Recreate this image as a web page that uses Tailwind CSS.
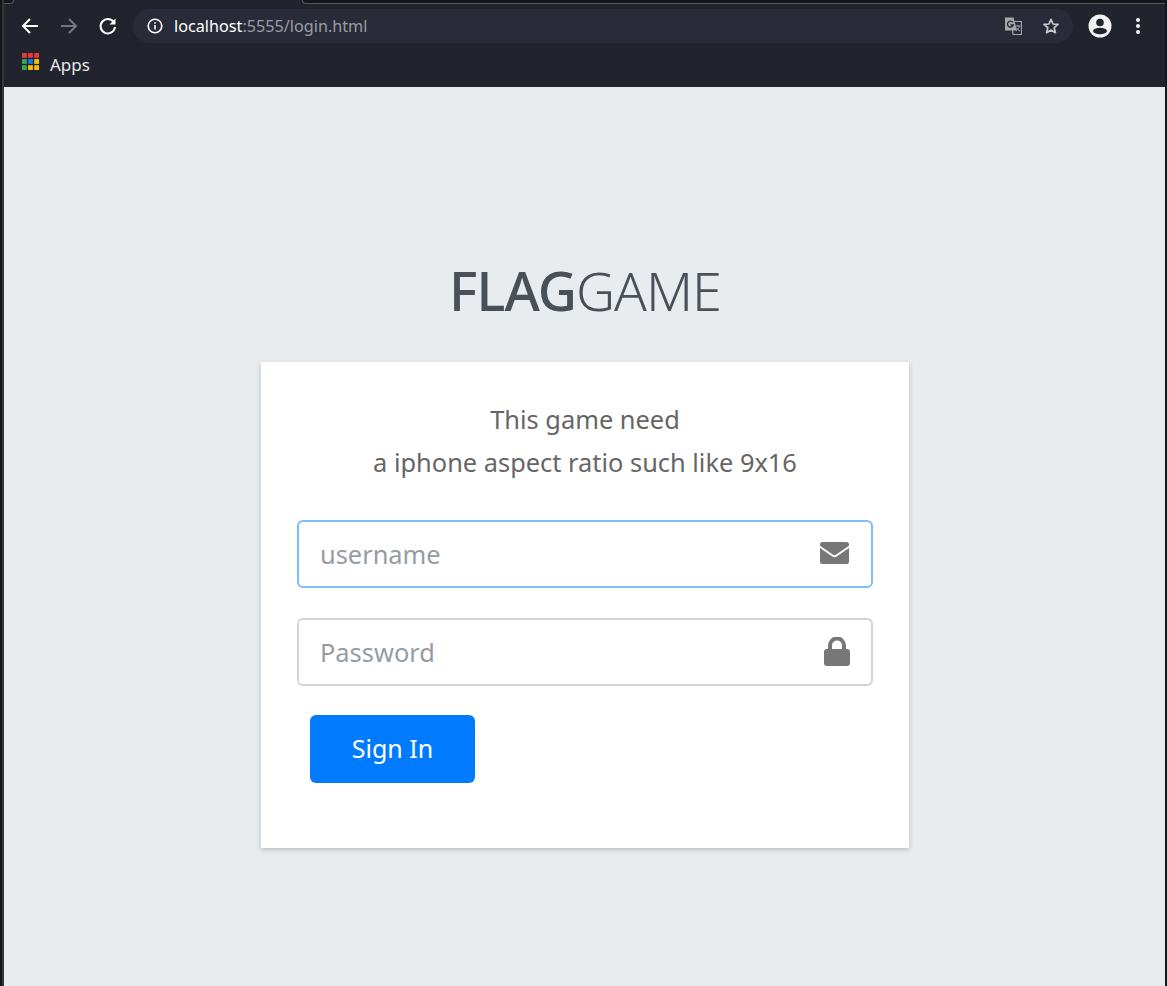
<!DOCTYPE html>
<html lang="en">
<head>
  <meta charset="UTF-8" />
  <title>FlagGame login</title>
  <script src="https://cdn.jsdelivr.net/npm/@tailwindcss/browser@4"></script>
</head>
<body class="h-[986px] w-[1167px] overflow-hidden bg-[#14161b] font-['Noto_Sans',sans-serif] flex">

<!-- window edge -->
<div class="w-[4px] shrink-0 flex justify-end"><div class="w-[2px] bg-[#34363b]"></div></div>

<div class="w-[1161px] shrink-0 flex flex-col">
  <!-- browser chrome -->
  <header class="h-[87px] shrink-0 bg-[#21242d] flex flex-col">
    <div class="h-[4px] shrink-0 flex">
      <div class="w-[10px] bg-[#14161b] border-b border-r border-[#55575b] rounded-br-[6px]"></div>
      <div class="w-[288px]"></div>
      <div class="flex-1 bg-[#14161b] border-b border-l border-[#55575b] rounded-bl-[6px]"></div>
    </div>
    <div class="h-[44px] flex items-center pl-[16px] pr-[24px]">
      <svg class="w-[20px] h-[20px]" viewBox="0 0 20 20" fill="none" stroke="#fff" stroke-width="2"><path d="M18 10H3M10 3l-7 7 7 7"/></svg>
      <svg class="w-[20px] h-[20px] ml-[19px]" viewBox="0 0 20 20" fill="none" stroke="#75777c" stroke-width="2"><path d="M2 10h15M10 3l7 7-7 7"/></svg>
      <svg class="w-[20px] h-[20px] ml-[19px]" viewBox="0 0 20 20" fill="none"><path d="M16 6.500A7.200 7.200 0 1 0 17 11" stroke="#fff" stroke-width="2"/><path d="M17.500 2.500v6h-6z" fill="#fff"/></svg>
      <div class="ml-[15px] h-[34px] flex-1 rounded-full bg-[#292c38] flex items-center pl-[14px] pr-[13px]">
        <svg class="w-[16px] h-[16px]" viewBox="0 0 16 16" fill="none"><circle cx="8" cy="8" r="6.800" stroke="#fff" stroke-width="1.600"/><path d="M8 7v4.500M8 4.200v1.600" stroke="#fff" stroke-width="1.600"/></svg>
        <span class="ml-[11px] text-[16.200px] text-white">localhost<span class="text-[#9a9ca2]">:5555/login.html</span></span>
        <svg class="ml-auto w-[18px] h-[18px]" viewBox="0 0 18 18">
          <path d="M8 4.500h9.500v13H9z" fill="#292c38" stroke="#a6a7ab" stroke-width="1.200"/>
          <path d="M1 .500h8.500l3.500 13H1z" fill="#a6a7ab"/>
          <path d="M9 5.500A3 3 0 1 0 9.300 8H6.500" fill="none" stroke="#292c38" stroke-width="1.300"/>
          <path d="M11.500 9h5M14 8v1M15.500 9c-.5 2-2 3.500-3.500 4.500M12.500 11c.8 1.300 2 2.500 3.500 3" fill="none" stroke="#a6a7ab"/>
        </svg>
        <svg class="ml-[20px] w-[18px] h-[18px]" viewBox="0 0 18 18" fill="none"><path d="M9 2.300l2 4.700 5 .4-3.800 3.300 1.200 5L9 13l-4.400 2.700 1.200-5L2 7.400 7 7z" stroke="#c8c9cc" stroke-width="1.700" stroke-linejoin="round"/></svg>
      </div>
      <svg class="ml-[15px] w-[24px] h-[24px]" viewBox="0 0 24 24"><circle cx="12" cy="12" r="11.500" fill="#f2f2f3"/><circle cx="12" cy="8.500" r="3.800" fill="#21242d"/><ellipse cx="12" cy="17" rx="7" ry="3.200" fill="#21242d"/></svg>
      <svg class="ml-[23px] w-[6px] h-[18px]" viewBox="0 0 6 18" fill="#f2f2f3"><circle cx="3" cy="3" r="2"/><circle cx="3" cy="9" r="2"/><circle cx="3" cy="15" r="2"/></svg>
    </div>
    <div class="h-[39px] flex items-start pl-[18px] pt-[5px]">
      <svg class="w-[17px] h-[17px]" viewBox="0 0 17 17">
        <rect x="0" y="0" width="4.800" height="4.800" fill="#e53935"/><rect x="6.100" y="0" width="4.800" height="4.800" fill="#e53935"/><rect x="12.200" y="0" width="4.800" height="4.800" fill="#e53935"/>
        <rect x="0" y="6.100" width="4.800" height="4.800" fill="#34a853"/><rect x="6.100" y="6.100" width="4.800" height="4.800" fill="#1a73e8"/><rect x="12.200" y="6.100" width="4.800" height="4.800" fill="#fbbc04"/>
        <rect x="0" y="12.200" width="4.800" height="4.800" fill="#34a853"/><rect x="6.100" y="12.200" width="4.800" height="4.800" fill="#fbbc04"/><rect x="12.200" y="12.200" width="4.800" height="4.800" fill="#fbbc04"/>
      </svg>
      <span class="ml-[11px] text-[17px] leading-[22px] mt-[1px] text-[#e8e9ea]">Apps</span>
    </div>
  </header>

  <main class="flex-1 bg-[#e9ecef] pl-[257px] flex flex-col">
    <h1 class="w-[648px] mt-[167px] text-center text-[54px] leading-[72px] tracking-[-1px] text-[#495057]"><span class="font-medium">FLAG</span><span class="font-light">GAME</span></h1>

    <section class="w-[648px] h-[486px] mt-[36px] bg-white shadow-[0_2px_5px_rgba(0,0,0,0.2)] px-[36px] pt-[36px]">
      <p class="text-center text-[25.400px] leading-[43px] text-[#666]">This game need<br />a iphone aspect ratio such like 9x16</p>

      <div class="mt-[36px] h-[68px] rounded-[6px] border-2 border-[#80bdff] flex items-center pl-[21px] pr-[22px]">
        <span class="text-[25.400px] text-[#959ca3]">username</span>
        <svg class="ml-auto w-[29px] h-[22px] -mt-[2px]" viewBox="0 0 29 22"><path d="M2.500 0h24A2.500 2.500 0 0 1 29 2.500v1.200L16.200 12.600a3 3 0 0 1-3.400 0L0 3.700V2.500A2.500 2.500 0 0 1 2.500 0z" fill="#777"/><path d="M0 6l12 8.300a4.500 4.500 0 0 0 5 0L29 6v13.500a2.500 2.500 0 0 1-2.500 2.500h-24A2.500 2.500 0 0 1 0 19.500z" fill="#777"/></svg>
      </div>

      <div class="mt-[30px] h-[68px] rounded-[6px] border-2 border-[#ced4da] flex items-center pl-[21px] pr-[21px]">
        <span class="text-[25.400px] text-[#959ca3]">Password</span>
        <svg class="ml-auto w-[26px] h-[29px] -mt-[1px]" viewBox="0 0 26 29"><path d="M6 13V8.500a7 7 0 0 1 14 0V13" fill="none" stroke="#777" stroke-width="4"/><rect x="0" y="12" width="26" height="17" rx="3" fill="#777"/></svg>
      </div>

      <button class="ml-[13px] mt-[29px] w-[165px] h-[68px] rounded-[6px] bg-[#007bff] text-white text-[25px]">Sign In</button>
    </section>
  </main>
</div>

</body>
</html>
